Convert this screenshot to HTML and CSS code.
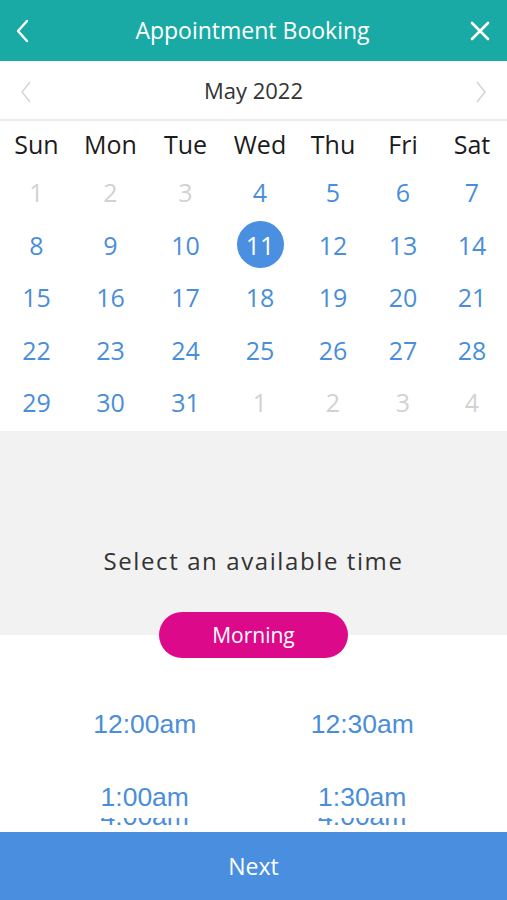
FILE: index.html
```html
<!DOCTYPE html>
<html lang="en">
  <head>
    <meta charset="UTF-8">
    <meta name="viewport" content="width=device-width, initial-scale=1.0">
    <title>Appointment Booking</title>
    <link rel="stylesheet" href="styles.css">
  </head>
  <body>
    <div id="all">
      <div class="topbar">
        <button class="icon-btn back" aria-label="back">
          <svg width="14" height="24" viewBox="0 0 14 24"><path d="M12 2 L3 12 L12 22" fill="none" stroke="#fff" stroke-width="2.4" stroke-linecap="round" stroke-linejoin="round"/></svg>
        </button>
        <h1>Appointment Booking</h1>
        <button class="icon-btn close" aria-label="close">
          <svg width="20" height="20" viewBox="0 0 20 20"><path d="M2 2 L18 18 M18 2 L2 18" fill="none" stroke="#fff" stroke-width="2.6" stroke-linecap="round"/></svg>
        </button>
      </div>

      <div class="month-bar">
        <span class="month-arrow">
          <svg width="12" height="22" viewBox="0 0 12 22"><path d="M10 1 L2 11 L10 21" fill="none" stroke="#d4d4d4" stroke-width="1.5"/></svg>
        </span>
        <div class="month-title">May 2022</div>
        <span class="month-arrow">
          <svg width="12" height="22" viewBox="0 0 12 22"><path d="M2 1 L10 11 L2 21" fill="none" stroke="#d4d4d4" stroke-width="1.5"/></svg>
        </span>
      </div>

      <div class="calendar">
        <div class="dow">Sun</div>
        <div class="dow">Mon</div>
        <div class="dow">Tue</div>
        <div class="dow">Wed</div>
        <div class="dow">Thu</div>
        <div class="dow">Fri</div>
        <div class="dow">Sat</div>

        <div class="day off">1</div>
        <div class="day off">2</div>
        <div class="day off">3</div>
        <div class="day">4</div>
        <div class="day">5</div>
        <div class="day">6</div>
        <div class="day">7</div>

        <div class="day">8</div>
        <div class="day">9</div>
        <div class="day">10</div>
        <div class="day"><span class="selected">11</span></div>
        <div class="day">12</div>
        <div class="day">13</div>
        <div class="day">14</div>

        <div class="day">15</div>
        <div class="day">16</div>
        <div class="day">17</div>
        <div class="day">18</div>
        <div class="day">19</div>
        <div class="day">20</div>
        <div class="day">21</div>

        <div class="day">22</div>
        <div class="day">23</div>
        <div class="day">24</div>
        <div class="day">25</div>
        <div class="day">26</div>
        <div class="day">27</div>
        <div class="day">28</div>

        <div class="day">29</div>
        <div class="day">30</div>
        <div class="day">31</div>
        <div class="day off">1</div>
        <div class="day off">2</div>
        <div class="day off">3</div>
        <div class="day off">4</div>
      </div>

      <div class="time-head">
        <p>Select an available time</p>
      </div>
      <div class="pill-wrap">
        <button class="pill">Morning</button>
      </div>

      <div class="slots">
        <div class="slot-row">
          <div class="slot">12:00am</div>
          <div class="slot">12:30am</div>
        </div>
        <div class="slot-row second">
          <div class="slot">1:00am</div>
          <div class="slot">1:30am</div>
        </div>
        <div class="slot-row peek">
          <div class="slot"><span>4:00am</span></div>
          <div class="slot"><span>4:00am</span></div>
        </div>
      </div>

      <button class="btn-next">Next</button>
    </div>
  </body>
</html>
```

FILE: styles.css
```css
*{
margin:0;
padding:0;
box-sizing:border-box;
}

body{
    background-color:#fff;
    color:#222;
    font-family:"Open Sans", sans-serif;
}

#all{
    width:507px;
    height:900px;
    display:flex;
    flex-direction:column;
    overflow:hidden;
}

button{
    border:none;
    background:none;
    font-family:"Open Sans", sans-serif;
    cursor:pointer;
}

.topbar{
    height:61px;
    background-color:#1aaaa5;
    display:flex;
    align-items:center;
    justify-content:space-between;
    padding:0 17px 0 15px;
}

.topbar h1{
    color:#fff;
    font-size:23px;
    font-weight:400;
    line-height:61px;
}

.icon-btn{
    width:22px;
    height:30px;
    display:flex;
    align-items:center;
}

.close{
    justify-content:flex-end;
}

.month-bar{
    height:60px;
    display:flex;
    align-items:center;
    justify-content:space-between;
    padding:0 20px;
    border-bottom:2px solid #ececec;
}

.month-title{
    font-size:22px;
    color:#333;
}

.month-arrow{
    display:flex;
    padding-top:4px;
}

.calendar{
    display:grid;
    grid-template-columns:73px 75px 75px 74px 72px 68px 70px;
    grid-auto-rows:52.5px;
    grid-template-rows:45px;
    padding-bottom:2px;
}

.dow,
.day{
    display:flex;
    align-items:center;
    justify-content:center;
    font-size:25px;
}

.dow{
    color:#1c1c1c;
}

.day{
    color:#4a8ed9;
}

.day.off{
    color:#d2d2d2;
}

.selected{
    width:47px;
    height:47px;
    border-radius:50%;
    background-color:#4a8fe0;
    color:#fff;
    display:flex;
    align-items:center;
    justify-content:center;
}

.time-head{
    background-color:#f2f2f2;
    padding:113px 0 57px;
    text-align:center;
}

.time-head p{
    font-size:24px;
    line-height:34px;
    letter-spacing:1.6px;
    color:#333;
}

.pill-wrap{
    display:flex;
    justify-content:center;
    margin-top:-23px;
}

.pill{
    width:189px;
    height:46px;
    border-radius:23px;
    background-color:#dc0a8a;
    color:#fff;
    font-size:21px;
}

.slots{
    flex:1;
    padding:51px 36px 0;
    font-family:"Liberation Sans", Arial, sans-serif;
    overflow:hidden;
}

.slot-row{
    display:grid;
    grid-template-columns:1fr 1fr;
}

.slot{
    text-align:center;
    font-size:26.5px;
    line-height:30px;
    color:#4a8ed9;
}

.second{
    margin-top:43px;
}

.peek{
    margin-top:6px;
    height:7px;
    overflow:hidden;
}

.peek span{
    display:block;
    margin-top:-17px;
}

.btn-next{
    height:68px;
    flex-shrink:0;
    background-color:#4a8fdf;
    color:#fff;
    font-size:23px;
}
```
